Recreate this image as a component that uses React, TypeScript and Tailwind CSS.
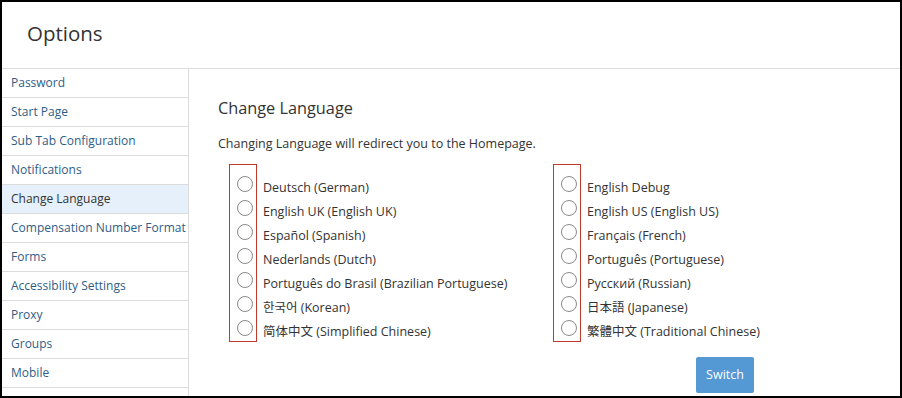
import React from "react";

const menu = [
  "Password",
  "Start Page",
  "Sub Tab Configuration",
  "Notifications",
  "Change Language",
  "Compensation Number Format",
  "Forms",
  "Accessibility Settings",
  "Proxy",
  "Groups",
  "Mobile",
  "Privacy Statement",
];

const leftLangs = [
  "Deutsch (German)",
  "English UK (English UK)",
  "Español (Spanish)",
  "Nederlands (Dutch)",
  "Português do Brasil (Brazilian Portuguese)",
  "한국어 (Korean)",
  "简体中文 (Simplified Chinese)",
];

const rightLangs = [
  "English Debug",
  "English US (English US)",
  "Français (French)",
  "Português (Portuguese)",
  "Русский (Russian)",
  "日本語 (Japanese)",
  "繁體中文 (Traditional Chinese)",
];

function LangColumn({ items }: { items: string[] }) {
  return (
    <div className="relative flex w-[324px] shrink-0 flex-col pt-[9px]">
      {/* red highlight around the radio column */}
      <div className="pointer-events-none absolute left-0 top-0 h-[178px] w-[28px] border border-[#c0392b]" />
      {items.map((label) => (
        <label key={label} className="flex h-[24px] items-center whitespace-nowrap">
          <span className="mb-[2px] ml-[8px] mr-[10px] h-[16px] w-[16px] shrink-0 rounded-full border border-[#8a8a8a] bg-white" />
          <span className="pt-[6px] text-[12.5px] text-[#333]">{label}</span>
        </label>
      ))}
    </div>
  );
}

export default function App() {
  return (
    <div
      className="h-[398px] w-[902px] overflow-hidden border-2 border-black bg-white"
      style={{ fontFamily: '"Open Sans", "Noto Sans CJK KR", "Noto Sans CJK JP", sans-serif' }}
    >
      <div className="h-[67px] border-b border-[#dcdcdc] pl-[25px] pt-[17px]">
        <h1 className="text-[20.5px] leading-[28px] text-[#333]">Options</h1>
      </div>
      <div className="flex">
        <div className="w-[187px] shrink-0 border-r border-[#dcdcdc]">
          {menu.map((m) => (
            <div
              key={m}
              className={
                m === "Change Language"
                  ? "h-[29px] overflow-hidden whitespace-nowrap border-b border-[#dcdcdc] bg-[#e5f0fa] pl-[9px] pt-[5px] text-[12px] text-[#333]"
                  : "h-[29px] overflow-hidden whitespace-nowrap border-b border-[#dcdcdc] pl-[9px] pt-[5px] text-[12px] text-[#2e5d87]"
              }
            >
              {m}
            </div>
          ))}
        </div>
        <div className="flex-1 pl-[29px] pt-[27px]">
          <h2 className="text-[16.3px] text-[#333]">Change Language</h2>
          <p className="mt-[15px] text-[12.5px] text-[#333]">
            Changing Language will redirect you to the Homepage.
          </p>
          <div className="mt-[10px] flex pl-[11px]">
            <LangColumn items={leftLangs} />
            <LangColumn items={rightLangs} />
          </div>
          <div className="mt-[16px] pl-[478px]">
            <button className="h-[36px] w-[58px] rounded-[2px] bg-[#5498d4] pt-[1px] text-[12.5px] text-white">
              Switch
            </button>
          </div>
        </div>
      </div>
    </div>
  );
}
